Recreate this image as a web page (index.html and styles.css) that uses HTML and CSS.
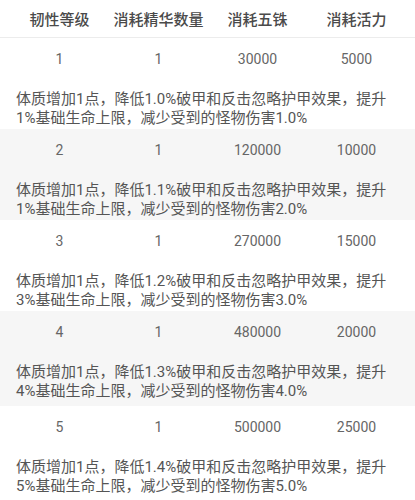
FILE: index.html
```html
<!DOCTYPE html>
<html lang="zh">
<head>
<meta charset="utf-8">
<link rel="stylesheet" href="styles.css">
</head>
<body>
<div class="table">
  <div class="head">
    <div class="cell">韧性等级</div>
    <div class="cell">消耗精华数量</div>
    <div class="cell">消耗五铢</div>
    <div class="cell">消耗活力</div>
  </div>
  <div class="block">
    <div class="row"><div class="cell">1</div><div class="cell">1</div><div class="cell">30000</div><div class="cell">5000</div></div>
    <p class="desc">体质增加1点，降低1.0%破甲和反击忽略护甲效果，提升1%基础生命上限，减少受到的怪物伤害1.0%</p>
  </div>
  <div class="block alt">
    <div class="row"><div class="cell">2</div><div class="cell">1</div><div class="cell">120000</div><div class="cell">10000</div></div>
    <p class="desc">体质增加1点，降低1.1%破甲和反击忽略护甲效果，提升1%基础生命上限，减少受到的怪物伤害2.0%</p>
  </div>
  <div class="block">
    <div class="row"><div class="cell">3</div><div class="cell">1</div><div class="cell">270000</div><div class="cell">15000</div></div>
    <p class="desc">体质增加1点，降低1.2%破甲和反击忽略护甲效果，提升3%基础生命上限，减少受到的怪物伤害3.0%</p>
  </div>
  <div class="block alt tall">
    <div class="row"><div class="cell">4</div><div class="cell">1</div><div class="cell">480000</div><div class="cell">20000</div></div>
    <p class="desc">体质增加1点，降低1.3%破甲和反击忽略护甲效果，提升4%基础生命上限，减少受到的怪物伤害4.0%</p>
  </div>
  <div class="block">
    <div class="row"><div class="cell">5</div><div class="cell">1</div><div class="cell">500000</div><div class="cell">25000</div></div>
    <p class="desc">体质增加1点，降低1.4%破甲和反击忽略护甲效果，提升5%基础生命上限，减少受到的怪物伤害5.0%</p>
  </div>
</div>
</body>
</html>
```
FILE: styles.css
```css
html, body {
  margin: 0;
  padding: 0;
  background: #ffffff;
}
body {
  font-family: Roboto, "Noto Sans CJK SC", sans-serif;
  color: #555555;
}
.head, .row {
  display: grid;
  grid-template-columns: repeat(4, 99px);
  padding: 0 10px;
}
.head {
  height: 37px;
  align-items: center;
  border-bottom: 1px solid #ececec;
  font-size: 15px;
  font-weight: 500;
  color: #4a4a4a;
}
.cell {
  text-align: center;
}
.row {
  height: 42px;
  align-items: center;
  font-size: 14px;
  color: #666666;
}
.block.alt {
  background: #f6f6f6;
}
.block.tall .desc {
  padding-bottom: 5px;
}
.desc {
  margin: 0;
  padding: 10px 16px 1px 16px;
  font-size: 15px;
  line-height: 19px;
  color: #555555;
}
```
